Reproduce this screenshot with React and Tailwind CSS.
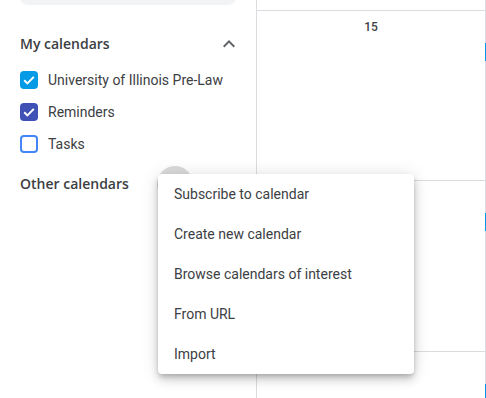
import React from "react";

const Check = () => (
  <svg width="18" height="18" viewBox="0 0 18 18" className="block">
    <path d="M4.2 9.3 L7.4 12.4 L13.8 5.9" fill="none" stroke="white" strokeWidth="2" />
  </svg>
);

const CalendarItem = ({ label, color, checked }) => (
  <div className="h-8 flex items-center pl-5">
    {checked ? (
      <div className={`w-[18px] h-[18px] rounded-sm ${color}`}>
        <Check />
      </div>
    ) : (
      <div className="w-[18px] h-[18px] rounded-sm border-2 border-[#4285f4]" />
    )}
    <span className="ml-[10px] text-sm text-[#3c4043]">{label}</span>
  </div>
);

const Cell = ({ day, h, last }) => (
  <div className={`relative border-r border-[#dadce0] ${last ? "flex-1" : "border-b " + h}`}>
    {day && <div className="pt-2 text-center text-xs font-medium leading-4 text-[#3c4043]">{day}</div>}
    <div className="absolute -right-px top-[32px] w-px h-[18px] bg-[#039be5]" />
  </div>
);

const menuItems = [
  "Subscribe to calendar",
  "Create new calendar",
  "Browse calendars of interest",
  "From URL",
  "Import",
];

export default function App() {
  return (
    <div className="relative w-[486px] h-[398px] overflow-hidden flex bg-white font-['Roboto',sans-serif]">
      <aside className="w-[256px] shrink-0 flex flex-col">
        <div className="mx-5 h-[40px] -mt-[35px] rounded-lg bg-[#f1f3f4]" />

        <div className="mt-[27px] h-6 flex items-center justify-between pl-5 pr-[15px]">
          <span className="font-['Open_Sans',sans-serif] text-sm font-semibold text-[#3c4043]">My calendars</span>
          <svg width="24" height="24" viewBox="0 0 24 24" fill="#5f6368">
            <path d="M7.41 15.41 12 10.83l4.59 4.58L18 14l-6-6-6 6z" />
          </svg>
        </div>
        <div className="mt-2">
          <CalendarItem label="University of Illinois Pre-Law" color="bg-[#039be5]" checked />
          <CalendarItem label="Reminders" color="bg-[#3f51b5]" checked />
          <CalendarItem label="Tasks" />
        </div>

        <div className="mt-3 h-6 flex items-center pl-5">
          <span className="w-[108px] font-['Open_Sans',sans-serif] text-sm font-semibold text-[#3c4043] whitespace-nowrap">Other calendars</span>
          <div className="ml-[29px] w-9 h-9 shrink-0 rounded-full bg-[#dadada]" />
        </div>
      </aside>

      <main className="flex-1 flex flex-col border-l border-[#dadce0]">
        <div className="h-[11px] border-b border-r border-[#dadce0]" />
        <Cell day="15" h="h-[170px]" />
        <Cell h="h-[171px]" />
        <Cell last />
      </main>

      <div className="absolute left-[158px] top-[174px] w-[256px] rounded bg-white shadow-[0_3px_5px_-1px_rgba(0,0,0,0.2),0_6px_10px_0_rgba(0,0,0,0.14),0_1px_18px_0_rgba(0,0,0,0.12)]">
        {menuItems.map((item) => (
          <div key={item} className="h-10 flex items-center px-4 text-sm text-[#3c4043]">
            {item}
          </div>
        ))}
      </div>
    </div>
  );
}
